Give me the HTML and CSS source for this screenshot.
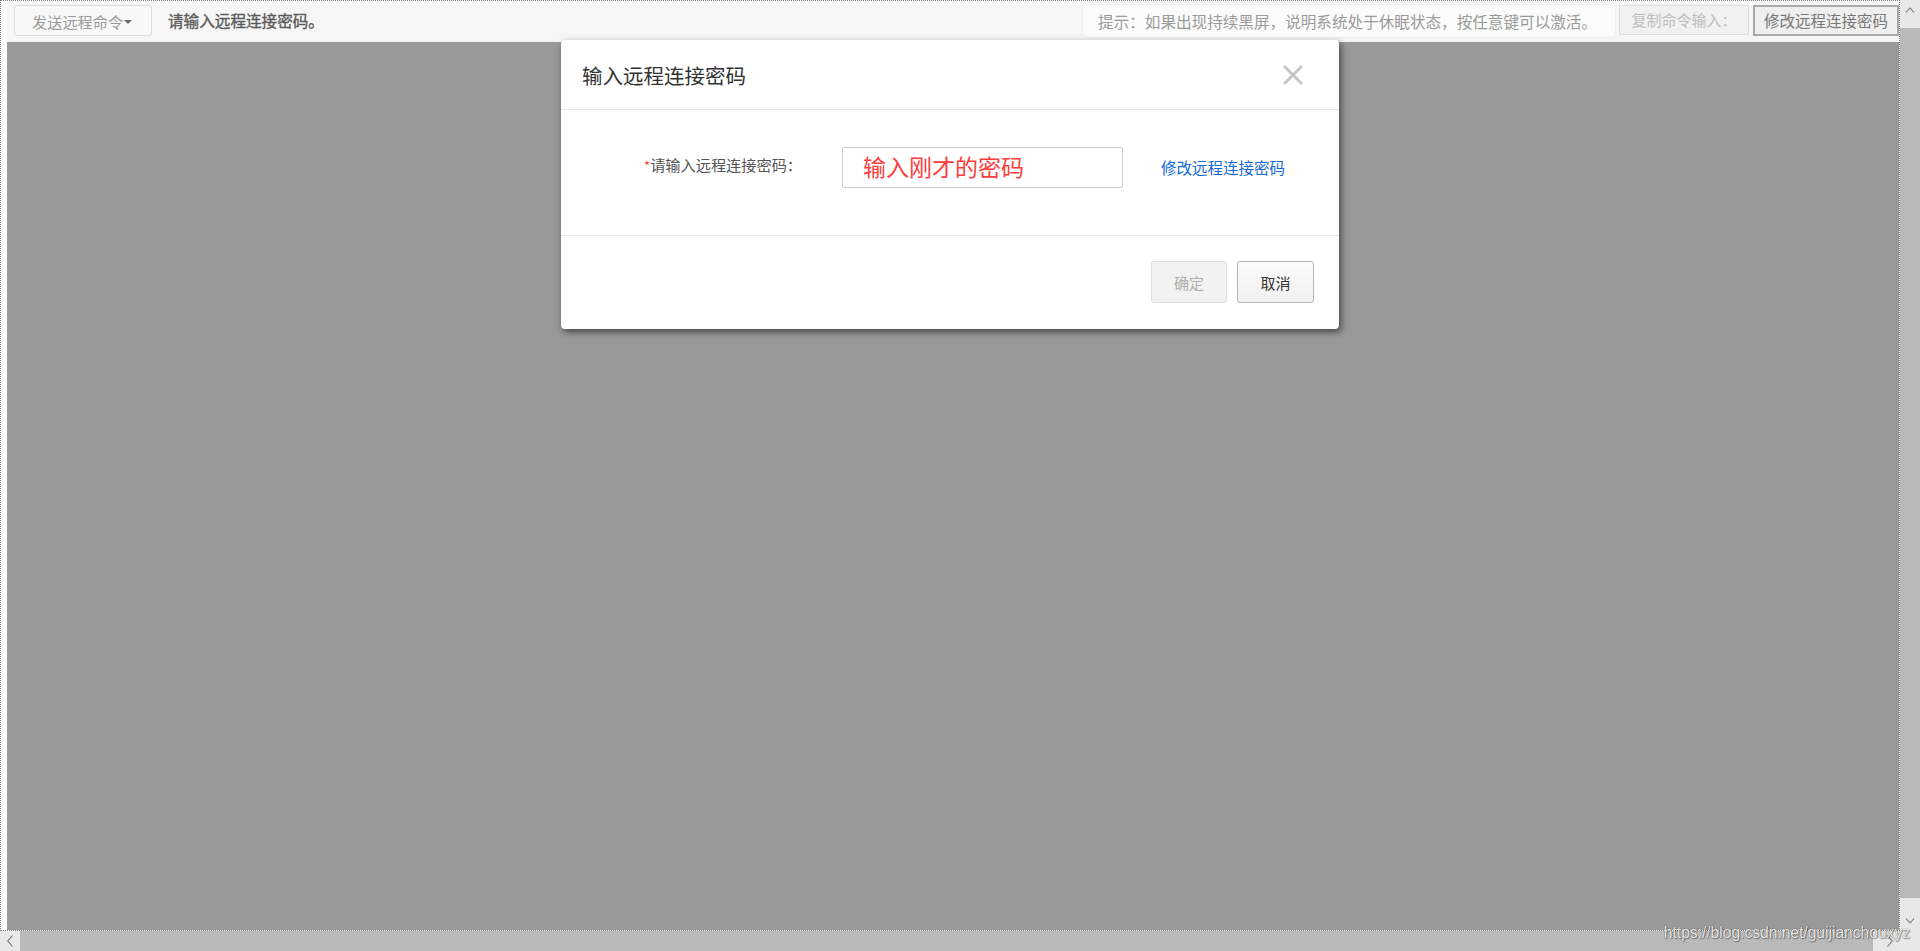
FILE: index.html
```html
<!DOCTYPE html>
<html lang="zh-CN">
<head>
<meta charset="utf-8">
<title>远程连接</title>
<link rel="stylesheet" href="styles.css">
</head>
<body>
<div class="window">
  <div class="frame">
    <div class="topbar">
      <div class="topbar-left">
        <button class="cmd-btn">发送远程命令<span class="caret"></span></button>
        <span class="status">请输入远程连接密码。</span>
      </div>
      <div class="topbar-right">
        <div class="tip">提示：如果出现持续黑屏，说明系统处于休眠状态，按任意键可以激活。</div>
        <div class="copy-input">复制命令输入：</div>
        <button class="change-btn">修改远程连接密码</button>
      </div>
    </div>
    <div class="screen"></div>

    <div class="modal">
      <div class="modal-header">
        <span class="modal-title">输入远程连接密码</span>
        <svg class="close" width="22" height="22" viewBox="0 0 22 22"><path d="M2 2 L20 20 M20 2 L2 20" stroke="#c6c6c6" stroke-width="3" fill="none"/></svg>
      </div>
      <div class="modal-body">
        <label class="field-label"><span class="req">*</span>请输入远程连接密码：</label>
        <div class="pwd-box">输入刚才的密码</div>
        <a class="link">修改远程连接密码</a>
      </div>
      <div class="modal-footer">
        <button class="btn btn-ok">确定</button>
        <button class="btn btn-cancel">取消</button>
      </div>
    </div>
  </div>

  <div class="vscroll">
    <div class="sb-btn"><svg width="10" height="6" viewBox="0 0 10 6"><polyline points="1,5.5 5,1 9,5.5" fill="none" stroke="#707070" stroke-width="1.1"/></svg></div>
    <div class="vtrack"><div class="vthumb"></div></div>
    <div class="sb-btn"><svg width="10" height="6" viewBox="0 0 10 6"><polyline points="1,0.5 5,5 9,0.5" fill="none" stroke="#707070" stroke-width="1.1"/></svg></div>
  </div>
  <div class="hscroll">
    <div class="sb-btn"><svg width="6" height="12" viewBox="0 0 6 12"><polyline points="5.5,0.5 0.8,6 5.5,11.5" fill="none" stroke="#707070" stroke-width="1.1"/></svg></div>
    <div class="htrack"><div class="hthumb"></div></div>
    <div class="sb-btn"><svg width="6" height="12" viewBox="0 0 6 12"><polyline points="0.5,0.5 5.2,6 0.5,11.5" fill="none" stroke="#707070" stroke-width="1.1"/></svg></div>
  </div>
  <div class="corner"></div>

  <div class="watermark">https://blog.csdn.net/guijianchouxyz</div>
</div>
</body>
</html>
```

FILE: styles.css
```css
html, body {
  margin: 0;
  padding: 0;
}

body {
  font-family: "Noto Sans CJK SC", "Microsoft YaHei", sans-serif;
  background: #ffffff;
  overflow: hidden;
}

button {
  font-family: inherit;
  cursor: pointer;
}

.window {
  position: relative;
  display: grid;
  grid-template-columns: 1900px 20px;
  grid-template-rows: 931px 20px;
  width: 1920px;
  height: 951px;
}

.frame {
  position: relative;
  box-sizing: border-box;
  border: 1px dotted #7a7a7a;
  padding-left: 6px;
  display: flex;
  flex-direction: column;
  background: #ffffff;
}

/* ---------- top bar ---------- */
.topbar {
  height: 41px;
  flex: none;
  background: #f6f6f6;
  display: flex;
  justify-content: space-between;
  align-items: flex-start;
}

.topbar-left {
  display: flex;
  align-items: center;
  padding-left: 7px;
  padding-top: 4px;
}

.cmd-btn {
  box-sizing: border-box;
  width: 138px;
  height: 31px;
  border: 1px solid #dcdcdc;
  border-radius: 3px;
  background: #f8f8f8;
  color: #9a9a9a;
  font-size: 15.2px;
  padding: 0 0 0 17px;
  display: flex;
  align-items: center;
  justify-content: flex-start;
}

.caret {
  display: inline-block;
  width: 0;
  height: 0;
  border-left: 4px solid transparent;
  border-right: 4px solid transparent;
  border-top: 4px solid #6a6a6a;
  margin-left: 1px;
  margin-top: 2px;
}

.status {
  margin-left: 16px;
  font-size: 15.6px;
  color: #5a5a5a;
  line-height: 31px;
  -webkit-text-stroke: 0.35px #5a5a5a;
}

.topbar-right {
  display: flex;
  align-items: flex-start;
  padding-top: 3px;
}

.tip {
  box-sizing: border-box;
  width: 534px;
  height: 34px;
  border: 1px solid #eeeeee;
  border-radius: 5px;
  background: #fbfbfb;
  color: #9a9a9a;
  font-size: 15.6px;
  line-height: 32px;
  padding-left: 15px;
  white-space: nowrap;
}

.copy-input {
  box-sizing: border-box;
  width: 130px;
  height: 30px;
  margin-top: 1px;
  margin-left: 3px;
  border: 1px solid #dddddd;
  background: #f1f1f1;
  color: #bdbdbd;
  font-size: 15px;
  line-height: 28px;
  text-align: center;
}

.change-btn {
  box-sizing: border-box;
  width: 146px;
  height: 31px;
  margin-top: 1px;
  margin-left: 4px;
  border: 2px solid #a9a9a9;
  background: #efefef;
  color: #777777;
  font-size: 15.5px;
  padding: 0;
  line-height: 27px;
}

/* ---------- remote screen ---------- */
.screen {
  flex: 1;
  background: #999999;
}

/* ---------- modal ---------- */
.modal {
  position: absolute;
  left: 560px;
  top: 39px;
  width: 778px;
  height: 289px;
  box-sizing: border-box;
  background: #ffffff;
  border-radius: 4px;
  box-shadow: 2px 3px 7px rgba(0, 0, 0, 0.55);
  display: flex;
  flex-direction: column;
}

.modal-header {
  height: 69px;
  flex: none;
  border-bottom: 1px solid #e6e6e6;
  display: flex;
  align-items: center;
  justify-content: space-between;
  padding: 0 35px 0 21px;
}

.modal-title {
  font-size: 20.5px;
  color: #333333;
}

.close {
  display: block;
  margin-top: 1px;
}

.modal-body {
  height: 126px;
  flex: none;
  box-sizing: border-box;
  border-bottom: 1px solid #e6e6e6;
  padding-top: 37px;
  display: flex;
  align-items: flex-start;
}

.field-label {
  width: 241px;
  text-align: right;
  font-size: 15.2px;
  color: #555555;
  line-height: 41px;
  margin-top: -3px;
  white-space: nowrap;
}

.req {
  color: #ff3b3b;
  font-size: 13px;
}

.pwd-box {
  box-sizing: border-box;
  width: 281px;
  height: 41px;
  margin-left: 40px;
  border: 1px solid #cccccc;
  border-radius: 2px;
  padding-left: 20px;
  color: #ff3c3c;
  font-size: 23px;
  line-height: 37px;
}

.link {
  margin-left: 38px;
  color: #1469d6;
  font-size: 15.5px;
  line-height: 41px;
  cursor: pointer;
}

.modal-footer {
  flex: 1;
  display: flex;
  justify-content: flex-end;
  align-items: flex-start;
  gap: 10px;
  padding: 25px 25px 0 0;
}

.btn {
  box-sizing: border-box;
  height: 42px;
  border-radius: 3px;
  font-size: 15px;
  padding: 0;
}

.btn-ok {
  width: 76px;
  border: 1px solid #dedede;
  background: #f2f2f2;
  color: #adadad;
}

.btn-cancel {
  width: 77px;
  border: 1px solid #b3b3b3;
  background: linear-gradient(#fbfbfb, #f1f1f1);
  color: #333333;
}

/* ---------- scrollbars ---------- */
.vscroll {
  background: #e8e8e8;
  display: flex;
  flex-direction: column;
}

.vscroll .sb-btn {
  height: 20px;
  flex: none;
  display: flex;
  align-items: center;
  justify-content: center;
}

.vtrack {
  flex: 1;
  padding: 8px 0 13px;
  display: flex;
}

.vthumb {
  flex: 1;
  background: #b9b9b9;
}

.hscroll {
  background: #e8e8e8;
  display: flex;
}

.hscroll .sb-btn {
  width: 20px;
  flex: none;
  display: flex;
  align-items: center;
  justify-content: center;
}

.htrack {
  flex: 1;
  padding: 0 7px 0 0;
  display: flex;
}

.hthumb {
  flex: 1;
  background: #b9b9b9;
}

.corner {
  background: #e8e8e8;
}

/* ---------- watermark ---------- */
.watermark {
  position: absolute;
  z-index: 2;
  right: 10px;
  bottom: 10px;
  font-family: "Liberation Sans", Arial, sans-serif;
  font-size: 15.6px;
  line-height: 16px;
  color: rgba(255, 255, 255, 0.9);
  text-shadow: 0 0 1px rgba(0, 0, 0, 0.7), 1px 1px 1px rgba(0, 0, 0, 0.35);
  white-space: nowrap;
}
```
